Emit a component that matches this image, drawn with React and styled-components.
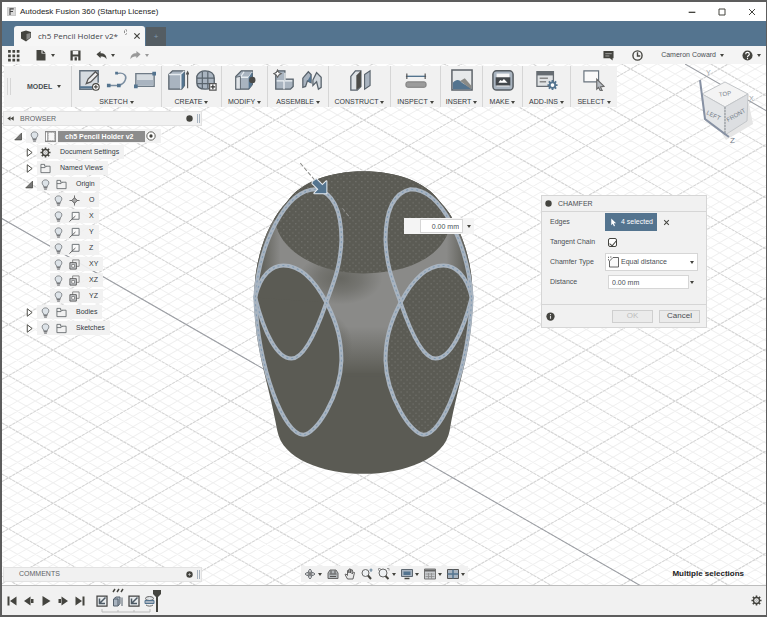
import React from "react";
import styled, { createGlobalStyle, css } from "styled-components";

const ink = "#4a4f54";
const dark = "#44443f";
const blue = "#54748f";
const pale = "#a9b4c0";
const panel = "#f1f1f1";
const line = "#d6d6d6";
const model = "#5b5b54";

const Global = createGlobalStyle`
  * { box-sizing: border-box; }
  body { margin: 0; background: #fff; font-family: "Liberation Sans", Arial, sans-serif; font-size: 8px; line-height: 12px; color: ${ink}; }
  button, input, select { font: inherit; color: inherit; margin: 0; padding: 0; border: 0; background: none; border-radius: 0; }
  svg { flex: none; }
`;

/* ---------- layout ---------- */
const Window = styled.div`
  display: flex;
  flex-direction: column;
  min-height: 100vh;
  border: 2px solid #5d5d5d;
  border-width: 2px 1px 2px 2px;
`;
const TitleBar = styled.header`
  display: flex;
  align-items: center;
  height: 19px;
  padding: 0 1px 0 5px;
  gap: 4px;
  background: #fff;
`;
const Title = styled.h1`
  flex: 1;
  margin: 0;
  font: 400 8px/12px "Liberation Sans", Arial, sans-serif;
  color: #1c1c1c;
`;
const WindowButton = styled.button`
  display: grid;
  place-items: center;
  width: 26px;
  height: 16px;
`;
const TabStrip = styled.nav`
  display: flex;
  align-items: flex-end;
  height: 25px;
  padding-left: 12px;
  background: ${blue};
`;
const Tab = styled.div`
  display: flex;
  align-items: center;
  height: 20px;
  width: 131px;
  padding: 0 4px 0 6px;
  gap: 6px;
  border-radius: 3px 3px 0 0;
  background: #f6f6f6;
  font: 400 8px/12px "Open Sans", sans-serif;
  color: #3d4247;
`;
const TabName = styled.span`
  flex: 1;
  white-space: nowrap;
`;
const Unsaved = styled.span`
  align-self: flex-start;
  width: 6px;
  height: 6px;
  margin-top: 3px;
  border: 1px dashed #8b8b8b;
  border-radius: 50%;
`;
const NewTab = styled.button`
  width: 20px;
  height: 19px;
  margin-left: 1px;
  background: #545d63;
  color: #7f99ae;
`;
const QuickBar = styled.div`
  display: flex;
  align-items: center;
  justify-content: space-between;
  height: 18px;
  padding: 0 5px;
  background: #f4f4f4;
`;
const QuickGroup = styled.div`
  display: flex;
  align-items: center;
  gap: ${(p) => p.$gap}px;
`;
const Plain = styled.button`
  display: inline-flex;
  align-items: center;
  gap: 4px;
  white-space: nowrap;
`;
const UserMenu = styled(Plain)`
  font-size: 7px;
`;
const Caret = styled.i`
  width: 0;
  height: 0;
  flex: none;
  border: 2px solid transparent;
  border-top: 3px solid ${(p) => p.$color || dark};
  border-bottom: 0;
`;
const Viewport = styled.main`
  position: relative;
  display: flex;
  flex-direction: column;
  flex: 1;
  min-height: 520px;
  overflow: hidden;
`;
const Scene = styled.svg`
  position: absolute;
  inset: 0;
  width: 100%;
  height: 100%;
`;
const Ribbon = styled.div`
  position: relative;
  display: flex;
  align-self: flex-start;
  height: 41px;
  margin: 2px 0 0 2px;
  background: ${panel};
`;
const RibbonGroup = styled.section`
  display: flex;
  flex-direction: column;
  align-items: center;
  justify-content: space-between;
  width: ${(p) => p.$w}px;
  padding-top: 3px;
  border-left: 1px solid ${line};
`;
const Tools = styled.div`
  display: flex;
  gap: 6px;
`;
const Workspace = styled.button`
  display: flex;
  align-items: center;
  gap: 5px;
  width: 67px;
  padding-left: 3px;
  font-size: 7px;
  font-weight: 700;
`;
const Grip = styled.span`
  width: 4px;
  height: 17px;
  margin-right: 11px;
  border: 1px solid ${line};
  border-width: 0 1px;
`;
const MenuButton = styled.button`
  display: flex;
  align-items: center;
  gap: 2px;
  font-size: 7px;
  line-height: 10px;
  color: #33383c;
  white-space: nowrap;
`;
const DockHeader = styled.div`
  position: relative;
  display: flex;
  align-items: center;
  gap: 6px;
  width: 199px;
  height: 15px;
  padding-left: ${(p) => p.$inset || 3}px;
  border: 1px solid #e2e2e2;
  background: ${panel};
  color: #5d6266;
`;
const BrowserHeader = styled(DockHeader)`
  margin: 4px 0 0 1px;
`;
const DockTitle = styled.h2`
  flex: 1;
  margin: 0;
  font-size: 7px;
  font-weight: 400;
`;
const DockEdge = styled.span`
  width: 3px;
  height: 9px;
  margin: 0 1px 0 -2px;
  border: 1px solid ${pale};
  border-width: 0 1px;
`;
const Tree = styled.ul`
  position: relative;
  align-self: flex-start;
  margin: 2px 0 0;
  padding: 0;
  list-style: none;
`;
const TreeRow = styled.li`
  display: flex;
  align-items: center;
  height: 16px;
  padding-left: ${(p) => [8, 19, 48][p.$level]}px;
`;
const Toggle = styled.button`
  display: grid;
  place-items: center;
  width: 16px;
  height: 14px;
`;
const Entry = styled.span`
  display: flex;
  align-items: center;
  height: 14px;
  padding-right: 5px;
  background: rgba(241, 241, 241, 0.92);
`;
const Slot = styled.span`
  display: grid;
  place-items: center;
  width: 16px;
  height: 14px;
`;
const EntryName = styled.span`
  min-width: 12px;
  padding-left: 7px;
  font-size: 7px;
  color: #33393f;
  white-space: nowrap;
  ${(p) =>
    p.$active &&
    css`
      height: 11px;
      line-height: 11px;
      padding-right: 12px;
      margin-right: 1px;
      background: #8c8c8c;
      color: #fff;
      font-weight: 700;
    `}
`;
const Footer = styled.div`
  position: relative;
  display: grid;
  grid-template-columns: 1fr auto 1fr;
  align-items: center;
  margin-top: auto;
  padding: 0 1px 3px;
`;
const NavBar = styled.div`
  display: flex;
  align-items: center;
  gap: 5px;
  height: 16px;
  padding: 0 3px;
  background: ${panel};
`;
const NavButton = styled(Plain)`
  gap: 2px;
`;
const Status = styled.output`
  justify-self: end;
  margin-right: 21px;
  color: #222;
  font-weight: 700;
`;
const Timeline = styled.footer`
  display: flex;
  align-items: center;
  height: 30px;
  padding: 0 4px;
  border-top: 1px solid #bdbdbd;
  background: ${panel};
`;
const Playback = styled.div`
  display: flex;
  gap: 5px;
  margin-right: 10px;
`;
const Features = styled.div`
  display: flex;
  flex: 1;
`;

/* ---------- floating parts ---------- */
const Dialog = styled.form`
  position: absolute;
  top: 131px;
  right: 59px;
  width: 166px;
  border: 1px solid ${line};
  background: ${panel};
`;
const DialogHead = styled.div`
  display: flex;
  align-items: center;
  gap: 6px;
  height: 16px;
  padding-left: 3px;
  border-bottom: 1px solid ${line};
`;
const Fields = styled.div`
  display: grid;
  grid-template-columns: 55px 1fr;
  grid-template-rows: repeat(4, 20px);
  align-items: center;
  padding: 0 8px 12px;
  font-size: 7px;
`;
const Field = styled.div`
  display: flex;
  align-items: center;
  gap: 6px;
`;
const Selected = styled.button`
  display: flex;
  align-items: center;
  justify-content: center;
  gap: 3px;
  width: 52px;
  height: 18px;
  background: ${blue};
  color: #fff;
  white-space: nowrap;
`;
const Check = styled.input`
  appearance: none;
  display: grid;
  place-items: center;
  width: 9px;
  height: 9px;
  margin-left: 3px;
  border: 1px solid ${dark};
  border-radius: 2px;
  background: #fff;
  &:checked::after {
    content: "";
    width: 3px;
    height: 6px;
    border: solid ${dark};
    border-width: 0 1px 1px 0;
    transform: rotate(40deg);
  }
`;
const ComboBox = styled.div`
  display: flex;
  align-items: center;
  width: 93px;
  height: 18px;
  padding: 0 3px 0 2px;
  border: 1px solid ${line};
  background: #fff;
`;
const Select = styled.select`
  appearance: none;
  flex: 1;
  padding-left: 1px;
`;
const Distance = styled.div`
  display: flex;
  align-items: center;
  gap: 1px;
  padding-left: 3px;
`;
const TextBox = styled.input`
  width: ${(p) => p.$w}px;
  height: 14px;
  padding: 0 3px;
  border: 1px solid ${line};
  background: #fff;
  font-size: 7px;
  text-align: ${(p) => p.$align || "left"};
`;
const DialogFoot = styled.div`
  display: flex;
  align-items: center;
  gap: 6px;
  height: 23px;
  padding: 0 6px 0 4px;
  border-top: 1px solid ${line};
`;
const Fill = styled.span`
  flex: 1;
`;
const DialogButton = styled.button`
  width: 41px;
  height: 13px;
  border: 1px solid #cfcfcf;
  background: #ebebeb;
  line-height: 10px;
  &:disabled {
    color: #bdbdbd;
  }
`;
const ValueBox = styled.label`
  position: absolute;
  top: 154px;
  left: calc(50% + 20px);
  display: flex;
  align-items: center;
  gap: 4px;
  height: 16px;
  padding: 0 3px 0 16px;
  background: #f4f4f4;
`;
const Cube = styled.svg`
  position: absolute;
  top: 0;
  right: 0;
`;

/* ---------- icons ---------- */
const Svg = ({ s = 12, w, h, box = "0 0 24 24", children }) => (
  <svg width={w || s} height={h || s} viewBox={box} fill="none" stroke={dark} strokeWidth="2" aria-hidden="true">
    {children}
  </svg>
);

const art = {
  sketch: (
    <>
      <path d="M2 2h20v17H2z" fill="#d5dbe0" stroke="none" />
      <path d="M2 2h20v13M2 1v21h14" stroke="#63707c" strokeWidth="1.600" />
      <path d="M2 20h16" stroke={blue} strokeWidth="2.500" />
      <path d="M9 16l2-5 8-8 3 3-8 8z" fill="#eee" strokeWidth="1.400" stroke="#555" />
      <circle cx="19.500" cy="19.500" r="3.600" fill="#fff" strokeWidth="1.200" />
      <path d="M19.500 17.500v4M17.500 19.500h4" strokeWidth="1.200" />
    </>
  ),
  line: (
    <>
      <path d="M3 18h11M12 5c8-2 11 3 9 7-1 3-4 5-7 6" stroke="#7b8ea1" strokeWidth="1.600" />
      <path d="M1 16h4v4H1zM12 16h4v4h-4zM10 3h3v3h-3z" fill={blue} stroke="none" />
    </>
  ),
  rect: (
    <>
      <path d="M2 5h20v14H2z" fill="#d5dbe0" stroke="#6f7b86" strokeWidth="1.500" />
      <path d="M3 12h18v6H3z" fill={pale} stroke="none" />
      <path d="M0 17h4v4H0zM20 3h4v4h-4z" fill={blue} stroke="none" />
    </>
  ),
  extrude: (
    <>
      <path d="M2 6l4-4h13v16l-3 4H2z" fill={pale} stroke="#59636c" strokeWidth="1.400" />
      <path d="M2 6h13v16M15 6l4-4" stroke="#e6ebf0" strokeWidth="1.400" />
      <path d="M16 6v16l3-4V3z" fill={blue} stroke="none" />
      <path d="M22.500 21V3M21 6l1.500-3L24 6" stroke="#555" strokeWidth="1.200" />
    </>
  ),
  form: (
    <>
      <path d="M2 8c2-5 6-6 9-6 6 0 10 3 10 8v6c-1 4-5 6-10 6-6 0-9-3-9-7z" fill={pale} stroke="#59636c" strokeWidth="1.500" />
      <path d="M2 10h19M2 16h18M8 3v18M14 3v18" stroke="#59636c" strokeWidth="1.300" />
      <path d="M16 16h7v7h-7z" fill="#fff" stroke="#555" strokeWidth="1.300" />
      <path d="M19.500 17v5M17 19.500h5" stroke="#333" strokeWidth="1.300" />
    </>
  ),
  modify: (
    <>
      <path d="M2 8l6-6h12v15l-4 5H2z" fill={pale} stroke="#59636c" strokeWidth="1.400" />
      <path d="M7 9l4-6M7 9h9l4-6" stroke="#e8edf1" strokeWidth="1.400" />
      <path d="M2 9l5-1v14H2z" fill="#e0e4e8" stroke="#59636c" strokeWidth="1" />
      <path d="M16 9l4-6v14l-4 5z" fill={blue} stroke="none" />
      <circle cx="20" cy="12" r="3.500" fill="#4a4a48" stroke="none" />
    </>
  ),
  component: (
    <>
      <path d="M3 4l3-2h7v9h9v8l-3 3H3z" fill={pale} stroke="#59636c" strokeWidth="1.400" />
      <path d="M4 13h8v9M13 13h8M13 4v8" stroke="#eef2f5" strokeWidth="1.400" />
      <path d="M5 1l1.500 3L9 5 6.500 6.500 5 9 3.500 6.500 1 5l2.500-1z" fill="#fff" stroke="#666" strokeWidth="1.200" />
    </>
  ),
  joint: (
    <>
      <path d="M2 20V10l6-7 3 3v9l-4-2-2 6z" fill={pale} stroke="#59636c" strokeWidth="1.400" />
      <path d="M13 12l4-8 5 5v11l-3 2-2-8-4 4z" fill="#cfd6dc" stroke="#59636c" strokeWidth="1.400" />
      <path d="M7 13l4-7v9z" fill={blue} stroke="none" />
    </>
  ),
  construct: (
    <>
      <path d="M2 8l5-6h6v17l-4 4H2z" fill="#dfe3e6" stroke="#59636c" strokeWidth="1.400" />
      <path d="M8 7l5-5v17l-5 4z" fill="#4d4d49" stroke="none" />
      <path d="M17 6l6-4v16l-6 4z" fill={pale} stroke="#59636c" strokeWidth="1.200" />
    </>
  ),
  inspect: (
    <>
      <path d="M1 8h22" stroke={blue} strokeWidth="1.500" />
      <path d="M2 5v6M22 5v6" stroke="#555" strokeWidth="1.300" />
      <rect x="1" y="14" width="22" height="6" rx="2" fill="#9b9b9b" stroke="#777" strokeWidth="1" />
    </>
  ),
  insert: (
    <>
      <path d="M1 1h22v22H1z" fill="#e7e9ea" stroke="#5c6268" strokeWidth="1.600" />
      <path d="M2 15c4-5 8-3 10 0l10 6v1H2z" fill={blue} stroke="none" />
      <path d="M10 13l5-3 7 8v4z" fill="#8a8a86" stroke="none" />
    </>
  ),
  make: (
    <>
      <rect x="1" y="2" width="22" height="21" rx="4" fill={pale} stroke="#555b60" strokeWidth="1.600" />
      <path d="M5 5h14v14H5z" fill="#f5f5f5" stroke="none" />
      <path d="M4 9h16v9H4z" fill="#44484c" stroke="none" />
      <path d="M7 15l2-3 2 1 2-2 4 4z" fill="#fff" stroke="none" />
    </>
  ),
  addins: (
    <>
      <path d="M1 3h18v16H1z" fill="#dfe2e4" stroke="#666c72" strokeWidth="1.400" />
      <path d="M1 3h18v4H1z" fill="#666c72" stroke="none" />
      <path d="M4 10h9M4 14h7" stroke="#888" strokeWidth="1.600" />
      <path d="M18 12v11M12.500 17.500h11M14 13.500l8 8M22 13.500l-8 8" stroke={blue} strokeWidth="2" />
      <circle cx="18" cy="17.500" r="3" fill="#fff" stroke={blue} strokeWidth="2" />
    </>
  ),
  select: (
    <>
      <path d="M1 2h16v12H1z" stroke="#68737d" strokeWidth="1.300" fill="#fafafa" />
      <path d="M15 11l8 8-4 .5 2 4-2 .5-2-4-2 2z" fill="#b5bac0" stroke="#666" strokeWidth="1.200" />
    </>
  ),
  grid: <path d="M2 2h5v5H2zM10 2h5v5h-5zM18 2h5v5h-5zM2 10h5v5H2zM10 10h5v5h-5zM18 10h5v5h-5zM2 18h5v5H2zM10 18h5v5h-5zM18 18h5v5h-5z" fill={dark} stroke="none" />,
  file: <path d="M3 2h10v7h8v14H3zM15 2l6 6h-6z" fill={dark} stroke="none" />,
  save: <path fillRule="evenodd" d="M1 1h22v22H1zM6 2v8h12V2zM6 14v9h4v-7h5v7h3v-9z" fill={dark} stroke="none" />,
  undo: <path d="M1 9l9-7v5c8 0 13 4 13 13-3-5-7-6-13-6v4z" fill={dark} stroke="none" />,
  redo: <path d="M23 9l-9-7v5C6 7 1 11 1 20c3-5 7-6 13-6v4z" fill="#999" stroke="none" />,
  comment: (
    <>
      <path d="M1 2h22v16h-2v5l-6-5H1z" fill={dark} stroke="none" />
      <path d="M5 8h14M5 13h9" stroke="#ccc" strokeWidth="1.500" />
    </>
  ),
  clock: (
    <>
      <circle cx="12" cy="12" r="10" strokeWidth="3" />
      <path d="M12 5v8h6" strokeWidth="3" />
    </>
  ),
  help: (
    <>
      <circle cx="12" cy="12" r="11" fill={dark} stroke="none" />
      <path d="M8 9c0-5 8-5 8 0 0 3-4 3-4 6M12 17v3" stroke="#fff" strokeWidth="2.500" />
    </>
  ),
  cube: (
    <>
      <path d="M2 4l10-3 10 3v11l-10 8L2 17z" fill={dark} stroke="none" />
      <path d="M13 8l8-2v9l-8 5z" fill="#8a8a88" stroke="none" />
    </>
  ),
  close: <path d="M4 4l16 16M20 4L4 20" strokeWidth="3.500" />,
  bulb: (
    <>
      <path d="M8 15C2 9 5 2 12 2s10 7 4 13v2H8z" fill="#dde3e8" stroke="#777c80" strokeWidth="2" />
      <path d="M8 19h8M9 22h6" stroke="#55585b" strokeWidth="2" />
    </>
  ),
  folder: <path d="M2 21V3h8v4h12v14zM2 10h9l3-3" stroke="#5d6266" strokeWidth="1.800" />,
  doc: (
    <>
      <path d="M0 0h24v24H0z" fill="#8c8c8c" stroke="none" />
      <path d="M1 2h5v20H1z" fill="#fff" stroke="#777" strokeWidth="1.500" />
      <path d="M7 3h14v18H7z" fill="#f6f6f6" stroke="#aaa" strokeDasharray="3 2" strokeWidth="2" />
    </>
  ),
  gear: (
    <>
      <circle cx="12" cy="12" r="6.500" strokeWidth="3" />
      <path d="M12 1v4M12 19v4M1 12h4M19 12h4M4 4l3 3M17 17l3 3M20 4l-3 3M7 17l-3 3" strokeWidth="3.500" />
      <circle cx="12" cy="12" r="2" strokeWidth="1" stroke="#777" />
    </>
  ),
  origin: (
    <>
      <path d="M12 1v22M1 12h22" strokeWidth="2" stroke="#666" />
      <path d="M12 6l6 6-6 6-6-6z" fill="#aaa" stroke="#555" />
    </>
  ),
  axis: (
    <>
      <path d="M7 3h15v15H7z" stroke="#666b70" strokeWidth="2" fill="#fafafa" />
      <path d="M1 23L14 11" stroke="#555" strokeWidth="2" />
    </>
  ),
  plane: (
    <>
      <path d="M8 2h14v14H8z" stroke="#777" strokeWidth="1.800" />
      <path d="M2 8h14v14H2z" fill="#cdd0d3" stroke="#555" strokeWidth="2" />
      <path d="M6 12h6v6H6z" fill="#fff" stroke="#666" strokeWidth="1.500" />
    </>
  ),
  closed: <path d="M6 2l13 10-13 10z" strokeWidth="2.500" fill="#fff" />,
  open: <path d="M2 21L20 3v18z" fill="#777" strokeWidth="2" />,
  radio: (
    <>
      <circle cx="12" cy="12" r="10" fill="#fff" strokeWidth="2" />
      <circle cx="12" cy="12" r="4" fill={dark} stroke="none" />
    </>
  ),
  dot: <circle cx="12" cy="12" r="11" fill={dark} stroke="none" />,
  plusDot: (
    <>
      <circle cx="12" cy="12" r="11" fill={dark} stroke="none" />
      <path d="M12 7v10M7 12h10" stroke="#ddd" />
    </>
  ),
  info: (
    <>
      <circle cx="12" cy="12" r="11" fill={dark} stroke="none" />
      <path d="M12 5v3M12 10v8" stroke="#ddd" strokeWidth="3" />
    </>
  ),
  collapse: <path d="M12 4L1 12l11 8zM23 4l-11 8 11 8z" fill={dark} stroke="none" />,
  orbit: (
    <>
      <path d="M12 2c5 4 5 16 0 20-5-4-5-16 0-20zM2 12c4-5 16-5 20 0-4 5-16 5-20 0z" stroke="#666b70" strokeWidth="2" />
      <path d="M12 9v6M9 12h6" stroke="#555" />
    </>
  ),
  look: (
    <>
      <path d="M2 21V10l4-6h12l4 6v11z" fill="#b4b8bb" stroke="#666" />
      <path d="M5 12h14M8 5v6M16 5v6M6 17h12" stroke="#555" />
    </>
  ),
  hand: <path d="M7 22L2 13l2-1 3 3V5l2-1 1 6V2h3v8l2-7 2 1-1 8 3-4 2 1-3 13z" fill="#e8e8e8" stroke="#555" strokeWidth="1.800" />,
  zoom: (
    <>
      <circle cx="9" cy="10" r="7" stroke="#666" fill="#eef1f3" />
      <path d="M14 15l6 7" strokeWidth="4" />
      <path d="M20 1v7M17 4h6" stroke={blue} strokeWidth="1.800" />
    </>
  ),
  fit: (
    <>
      <path d="M1 5V1h4M18 1h4v4" stroke="#999" />
      <circle cx="10" cy="10" r="8" stroke="#666" fill="#eef1f3" />
      <path d="M15 16l6 6" strokeWidth="4" />
    </>
  ),
  display: (
    <>
      <path d="M1 3h22v14H1z" fill={pale} stroke="#5d6770" />
      <path d="M5 7h14v7H5z" fill={blue} stroke="none" />
      <path d="M7 21h10" strokeWidth="3" />
    </>
  ),
  gridset: (
    <>
      <path d="M1 2h22v20H1z" fill="#c9cccf" stroke="#777" />
      <path d="M1 5h22" stroke="#666" strokeWidth="4" />
      <path d="M3 12h18M3 17h18M9 10v12M15 10v12" stroke="#888" strokeWidth="1.500" />
    </>
  ),
  views: (
    <>
      <path d="M1 3h22v18H1z" fill={pale} stroke="#555" />
      <path d="M12 3v18M1 12h22" stroke={blue} strokeWidth="3" />
    </>
  ),
  first: <path d="M3 3h4v18H3zM21 3v18L8 12z" fill={dark} stroke="none" />,
  prev: <path d="M15 3v18L2 12zM16 8h5v8h-5z" fill={dark} stroke="none" />,
  play: <path d="M5 2l16 10L5 22z" fill={dark} stroke="none" />,
  next: <path d="M9 3v18l13-9zM3 8h5v8H3z" fill={dark} stroke="none" />,
  last: <path d="M17 3h4v18h-4zM3 3v18l13-9z" fill={dark} stroke="none" />,
  fSketch: (
    <>
      <path d="M2 2h20v20H2z" fill="#e9ecee" stroke="#444" strokeWidth="2.500" />
      <path d="M7 7v10h11M8 16L19 5" stroke="#4c5964" strokeWidth="3" />
    </>
  ),
  fExtrude: (
    <>
      <path d="M3 8l5-4h8v13l-4 5H3z" fill={pale} stroke="#55616c" />
      <path d="M4 8h8v13M20 22V5" stroke="#55616c" />
    </>
  ),
  fPattern: (
    <>
      <ellipse cx="11" cy="7" rx="8" ry="4" fill="#dfe3e6" stroke="#666" />
      <path d="M2 11h18v6H2z" fill={pale} stroke={blue} />
      <path d="M4 20c4 3 10 3 14 0" stroke="#666" />
    </>
  ),
  chamfer: (
    <>
      <path d="M3 22V10l7-7h11v19z" fill="#fafafa" stroke="#555" strokeWidth="1.800" />
      <path d="M1 9V2h8" stroke="#777" strokeDasharray="3 2" />
    </>
  ),
  cursor: <path d="M6 1l13 13h-6l3 7-3 1-3-7-4 4z" fill="#fff" stroke="none" />,
};
const Icon = ({ name, size = 12 }) => <Svg s={size}>{art[name]}</Svg>;

/* ---------- data ---------- */
const ribbon = [
  { name: "SKETCH", w: 90, icons: ["sketch", "line", "rect"] },
  { name: "CREATE", w: 60, icons: ["extrude", "form"] },
  { name: "MODIFY", w: 46, icons: ["modify"] },
  { name: "ASSEMBLE", w: 61, icons: ["component", "joint"] },
  { name: "CONSTRUCT", w: 62, icons: ["construct"] },
  { name: "INSPECT", w: 50, icons: ["inspect"] },
  { name: "INSERT", w: 42, icons: ["insert"] },
  { name: "MAKE", w: 40, icons: ["make"] },
  { name: "ADD-INS", w: 48, icons: ["addins"] },
  { name: "SELECT", w: 47, icons: ["select"] },
];
const tree = [
  { name: "ch5 Pencil Holder v2", level: 0, toggle: "open", bulb: true, icon: "doc", active: true },
  { name: "Document Settings", level: 1, toggle: "closed", icon: "gear" },
  { name: "Named Views", level: 1, toggle: "closed", icon: "folder" },
  { name: "Origin", level: 1, toggle: "open", bulb: true, icon: "folder" },
  { name: "O", level: 2, bulb: true, icon: "origin" },
  { name: "X", level: 2, bulb: true, icon: "axis" },
  { name: "Y", level: 2, bulb: true, icon: "axis" },
  { name: "Z", level: 2, bulb: true, icon: "axis" },
  { name: "XY", level: 2, bulb: true, icon: "plane" },
  { name: "XZ", level: 2, bulb: true, icon: "plane" },
  { name: "YZ", level: 2, bulb: true, icon: "plane" },
  { name: "Bodies", level: 1, toggle: "closed", bulb: true, icon: "folder" },
  { name: "Sketches", level: 1, toggle: "closed", bulb: true, icon: "folder" },
];
const nav = [
  ["orbit", "Orbit", true],
  ["look", "Look at"],
  ["hand", "Pan"],
  ["zoom", "Zoom"],
  ["fit", "Fit", true],
  ["display", "Display settings", true],
  ["gridset", "Grid settings", true],
  ["views", "Viewports", true],
];

/* ---------- scene ---------- */
const SLOPE = 0.575;
const gridLines = (start, step, count, dir) =>
  Array.from({ length: count }, (_, i) => {
    const c = start + i * step;
    return `M-400 ${c - dir * 400 * SLOPE}L1200 ${c + dir * 1200 * SLOPE}`;
  }).join("");

const body =
  "M363 171C395 171 425 181 439 201C460 223 472 260 472 296C472 350 458 378 449 430C444 458 404 473 363 473C322 473 282 458 277 430C268 378 254 350 254 296C254 260 266 223 287 201C301 181 331 171 363 171Z";
const opening = "M275 222C280 251 318 273 363 273C410 273 446 254 450 222L470 160H250z";
const upperLoop =
  "M255 297C259 244 285 189 316 189C335 193 341 213 341 240C340 266 334 280 326 302C315 334 303 358 291 358C277 358 264 333 255 297Z";
const lowerLoop =
  "M255 297C260 274 272 265 283 265C299 265 314 279 326 302C338 325 341 342 341 360C340 396 315 434 303 434C284 434 258 370 255 297Z";
const vee = "M255 297L326 302C315 334 303 358 291 358C277 358 264 333 255 297Z";

const Loops = ({ dotted }) => (
  <>
    <path d={lowerLoop} fill={model} />
    <path d={vee} fill={model} />
    {dotted && <path d={lowerLoop} fill="url(#dots)" opacity="0.8" />}
    {[upperLoop, lowerLoop].map((d) => (
      <g key={d} fill="none">
        <path d={d} stroke={pale} strokeWidth="4" />
        <path d={d} stroke="#7f9ab3" strokeWidth="1" strokeDasharray="2 3" />
      </g>
    ))}
  </>
);

const Model = () => (
  <Scene viewBox="2 64 763 520" preserveAspectRatio="xMidYMid slice" role="img" aria-label="Pencil holder body">
    <defs>
      <linearGradient id="band" x1="0" x2="1" y1="0" y2="0">
        <stop offset="0.02" stopColor={model} />
        <stop offset="0.12" stopColor="#8a8a88" />
        <stop offset="0.88" stopColor="#8a8a88" />
        <stop offset="0.98" stopColor={model} />
      </linearGradient>
      <linearGradient id="fade" x1="0" x2="0" y1="0" y2="1">
        <stop offset="0" stopColor={model} stopOpacity="0" />
        <stop offset="1" stopColor={model} />
      </linearGradient>
      <radialGradient id="shade">
        <stop offset="0" stopColor={model} stopOpacity="0.75" />
        <stop offset="0.5" stopColor={model} stopOpacity="0.45" />
        <stop offset="1" stopColor={model} stopOpacity="0" />
      </radialGradient>
      <pattern id="dots" width="6" height="6" patternUnits="userSpaceOnUse">
        <path d="M1 1h1v1H1zM4 4h1v1H4z" fill="#8f8f8c" />
      </pattern>
      <clipPath id="bodyClip">
        <path d={body} />
      </clipPath>
    </defs>
    <path d={gridLines(-640, 10.2, 200, 1) + gridLines(-130, 10.2, 170, -1)} stroke="#f0f0f0" fill="none" />
    <path d={gridLines(-650, 51, 36, 1) + gridLines(-130, 51, 30, -1)} stroke="#d3d3d3" strokeDasharray="3 1" fill="none" />
    <path d="M-400 -13L1200 907M684 64L1200 361" stroke="#9a9da3" fill="none" />
    <path d={body} fill={model} />
    <g clipPath="url(#bodyClip)">
      <path d="M254 205H472V300H254z" fill="url(#band)" />
      <path d="M300 299H426V374H300z" fill="#8a8a88" />
      <path d="M300 326H426V374H300z" fill="url(#fade)" />
      <path d="M300 373H426V376H300z" fill={model} />
      <ellipse cx="340" cy="278" rx="42" ry="26" fill="url(#shade)" />
      <ellipse cx="322" cy="345" rx="30" ry="34" fill="url(#shade)" />
      <path d={opening} fill={model} />
      <path d={opening} fill="url(#dots)" opacity="0.8" />
    </g>
    <Loops />
    <g transform="matrix(-1 0 0 1 726 0)">
      <Loops dotted />
    </g>
    <path d="M300 163L317 183M342 208l8 10" stroke="#8d8d8a" strokeDasharray="4 2" />
    <path d="M313 181l3-2 6 6 4-4v12h-12l4-4-6-6z" fill={blue} stroke="#e6ebf0" strokeWidth="2" strokeLinejoin="round" paintOrder="stroke" />
  </Scene>
);

const ViewCube = () => (
  <Cube width="70" height="84" viewBox="696 64 70 84" fill="none" role="img" aria-label="View cube">
    <path d="M700 98l26 42 27-16-4-20z" fill="#e6e6e6" />
    <path d="M702 94l23-12 23 12-23 13z" fill="#f4f4f4" stroke="#c3c6c9" />
    <path d="M702 94l23 13v28l-20-15z" fill="#e3e5e7" stroke="#c3c6c9" />
    <path d="M748 94l-23 13v28l22-14z" fill="#dcdee1" stroke="#c3c6c9" />
    <path d="M725 107v28" stroke="#8f959b" strokeDasharray="2 1" />
    <path d="M700 80l5 39 24 18" stroke="#8791a3" strokeWidth="2" />
    <g fontSize="6" fill="#737c88">
      <text x="719" y="96" transform="rotate(-8 725 94)">TOP</text>
      <text x="706" y="114" transform="rotate(26 706 114)">LEFT</text>
      <text x="728" y="122" transform="rotate(-30 728 122)">FRONT</text>
      <text x="730" y="143" fontSize="8">Z</text>
      <text x="749" y="101" fontSize="7" fill="#a5a9ae">X</text>
      <text x="706" y="75" fontSize="7" fill="#a5a9ae">Y</text>
    </g>
  </Cube>
);

export default function App() {
  return (
    <Window>
      <Global />
      <TitleBar>
        <Svg s={9}>
          <path d="M1 1h22v22H1z" fill="#d9d9d9" stroke="#bbb" />
          <path d="M8 21V5h10M8 12h8" stroke="#444" strokeWidth="3" />
        </Svg>
        <Title>Autodesk Fusion 360 (Startup License)</Title>
        <WindowButton aria-label="Minimize">
          <Svg s={8}><path d="M2 13h20" strokeWidth="4" /></Svg>
        </WindowButton>
        <WindowButton aria-label="Maximize">
          <Svg s={8}><path d="M3 3h18v18H3z" strokeWidth="3" /></Svg>
        </WindowButton>
        <WindowButton aria-label="Close">
          <Svg s={8}><path d="M3 3l18 18M21 3L3 21" strokeWidth="3" /></Svg>
        </WindowButton>
      </TitleBar>
      <TabStrip>
        <Tab>
          <Icon name="cube" size={12} />
          <TabName>ch5 Pencil Holder v2*</TabName>
          <Unsaved />
          <Plain aria-label="Close tab"><Icon name="close" size={8} /></Plain>
        </Tab>
        <NewTab aria-label="New tab">+</NewTab>
      </TabStrip>
      <QuickBar>
        <QuickGroup $gap={15}>
          <Plain aria-label="Data panel"><Icon name="grid" size={13} /></Plain>
          <Plain aria-label="File"><Icon name="file" size={12} /><Caret /></Plain>
          <Plain aria-label="Save"><Icon name="save" size={11} /></Plain>
          <Plain aria-label="Undo"><Icon name="undo" size={11} /><Caret /></Plain>
          <Plain aria-label="Redo"><Icon name="redo" size={11} /><Caret $color="#999" /></Plain>
        </QuickGroup>
        <QuickGroup $gap={18}>
          <Plain aria-label="Comments"><Icon name="comment" size={11} /></Plain>
          <Plain aria-label="Job status"><Icon name="clock" size={11} /></Plain>
          <UserMenu>Cameron Coward<Caret /></UserMenu>
          <Plain aria-label="Help"><Icon name="help" size={11} /><Caret /></Plain>
        </QuickGroup>
      </QuickBar>

      <Viewport>
        <Model />
        <Ribbon>
          <Workspace><Grip />MODEL<Caret /></Workspace>
          {ribbon.map((g) => (
            <RibbonGroup key={g.name} $w={g.w}>
              <Tools>
                {g.icons.map((i) => (
                  <Plain key={i} aria-label={i}><Icon name={i} size={22} /></Plain>
                ))}
              </Tools>
              <MenuButton>{g.name}<Caret /></MenuButton>
            </RibbonGroup>
          ))}
        </Ribbon>
        <BrowserHeader>
          <Icon name="collapse" size={7} />
          <DockTitle>BROWSER</DockTitle>
          <Icon name="dot" size={7} />
          <DockEdge />
        </BrowserHeader>
        <Tree>
          {tree.map((t) => (
            <TreeRow key={t.name} $level={t.level}>
              {t.toggle && (
                <Toggle aria-label={`Toggle ${t.name}`}><Icon name={t.toggle} size={9} /></Toggle>
              )}
              <Entry>
                {t.bulb && <Slot><Icon name="bulb" size={11} /></Slot>}
                <Slot><Icon name={t.icon} size={11} /></Slot>
                <EntryName $active={t.active}>{t.name}</EntryName>
                {t.active && <Icon name="radio" size={10} />}
              </Entry>
            </TreeRow>
          ))}
        </Tree>

        <ValueBox>
          <TextBox $w={43} $align="right" defaultValue="0.00 mm" aria-label="Chamfer distance" />
          <Caret />
        </ValueBox>

        <Dialog onSubmit={(e) => e.preventDefault()}>
          <DialogHead><Icon name="dot" size={7} /><DockTitle>CHAMFER</DockTitle></DialogHead>
          <Fields>
            <span>Edges</span>
            <Field>
              <Selected type="button"><Icon name="cursor" size={9} />4 selected</Selected>
              <Plain type="button" aria-label="Clear selection"><Icon name="close" size={7} /></Plain>
            </Field>
            <label htmlFor="tangent">Tangent Chain</label>
            <Check id="tangent" type="checkbox" defaultChecked />
            <label htmlFor="type">Chamfer Type</label>
            <ComboBox>
              <Icon name="chamfer" size={12} />
              <Select id="type"><option>Equal distance</option></Select>
              <Caret />
            </ComboBox>
            <label htmlFor="distance">Distance</label>
            <Distance>
              <TextBox id="distance" $w={81} defaultValue="0.00 mm" />
              <Caret />
            </Distance>
          </Fields>
          <DialogFoot>
            <Icon name="info" size={9} />
            <Fill />
            <DialogButton disabled>OK</DialogButton>
            <DialogButton type="button">Cancel</DialogButton>
          </DialogFoot>
        </Dialog>
        <ViewCube />

        <Footer>
          <DockHeader $inset={15}>
            <DockTitle>COMMENTS</DockTitle>
            <Icon name="plusDot" size={7} />
            <DockEdge />
          </DockHeader>
          <NavBar>
            {nav.map(([icon, label, menu]) => (
              <NavButton key={icon} aria-label={label}><Icon name={icon} size={12} />{menu && <Caret />}</NavButton>
            ))}
          </NavBar>
          <Status>Multiple selections</Status>
        </Footer>
      </Viewport>

      <Timeline>
        <Playback>
          {["first", "prev", "play", "next", "last"].map((n) => (
            <Plain key={n} aria-label={n}><Icon name={n} size={12} /></Plain>
          ))}
        </Playback>
        <Features>
          <Svg w={68} h={26} box="0 0 68 26">
            <svg x="0" y="7" width="12" height="12" viewBox="0 0 24 24">{art.fSketch}</svg>
            <svg x="16" y="7" width="12" height="12" viewBox="0 0 24 24">{art.fExtrude}</svg>
            <svg x="32" y="7" width="12" height="12" viewBox="0 0 24 24">{art.fSketch}</svg>
            <svg x="48" y="7" width="12" height="12" viewBox="0 0 24 24">{art.fPattern}</svg>
            <path d="M17 4l2-3M21 4l2-3M25 4l2-3" strokeWidth="1.500" />
            <path d="M6 21v3h48v-3M22 22v2M38 22v2" stroke="#bbb" strokeWidth="1" />
            <path d="M57 2h8v4l-3 3v15h-2V9l-3-3z" fill={dark} stroke="none" />
          </Svg>
        </Features>
        <Plain aria-label="Settings"><Icon name="gear" size={11} /></Plain>
      </Timeline>
    </Window>
  );
}
